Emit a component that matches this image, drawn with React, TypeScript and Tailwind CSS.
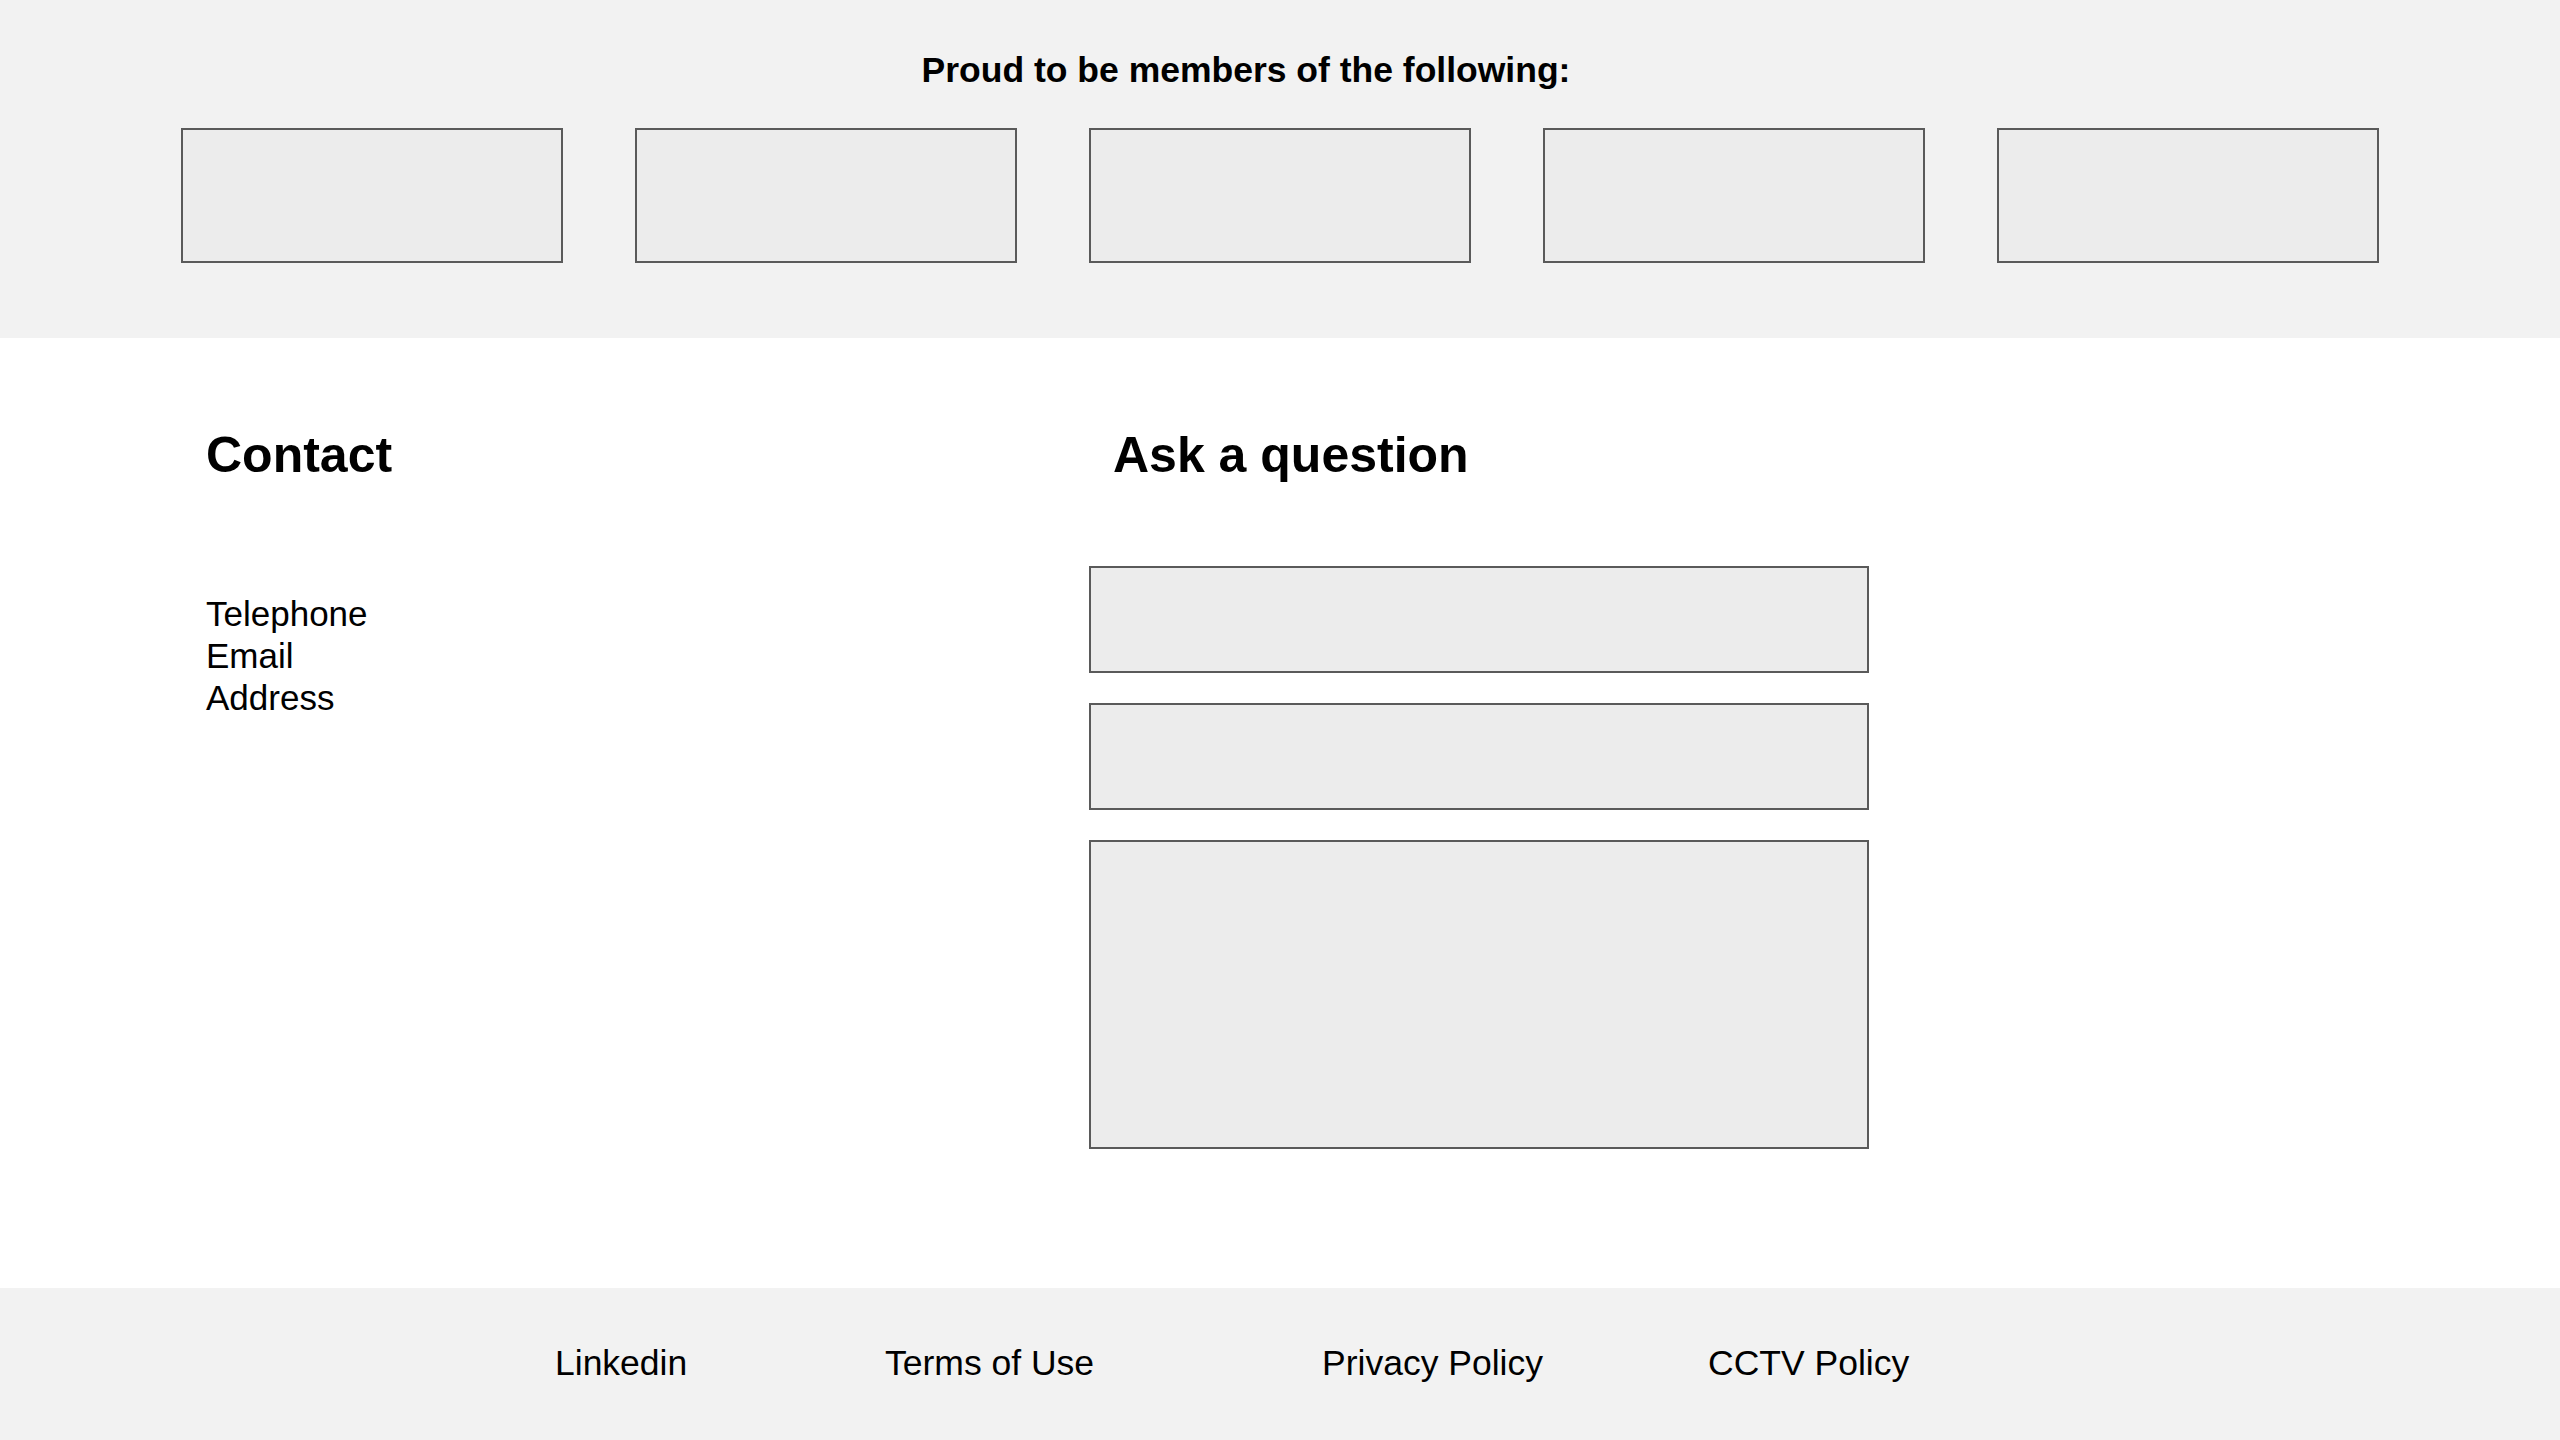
import React from "react";

const font = { fontFamily: '"Liberation Sans", Arial, sans-serif' };

function LogoBox() {
  return <div className="w-[382px] h-[135px] border-2 border-[#5a5a5a] bg-[#ececec] shrink-0" />;
}

export default function App() {
  return (
    <div className="w-[2560px] h-[1440px] bg-white text-black flex flex-col" style={font}>
      <section className="bg-[#f2f2f2] h-[338px] flex flex-col items-center">
        <div className="mt-[50px] h-[40px] leading-[40px] text-[35.5px] font-bold pr-[68px]">
          Proud to be members of the following:
        </div>
        <div className="mt-[38px] flex gap-[72px]">
          <LogoBox />
          <LogoBox />
          <LogoBox />
          <LogoBox />
          <LogoBox />
        </div>
      </section>

      <section className="h-[950px] flex pl-[206px] pt-[87px]">
        <div className="w-[883px] flex flex-col">
          <h2 className="text-[50px] font-bold leading-[60px] h-[60px]">Contact</h2>
          <div className="mt-[108px] text-[35px] leading-[42px]">
            <div>Telephone</div>
            <div>Email</div>
            <div>Address</div>
          </div>
        </div>
        <div className="w-[780px] flex flex-col">
          <h2 className="pl-[24px] text-[50px] font-bold leading-[60px] h-[60px]">Ask a question</h2>
          <div className="mt-[81px] flex flex-col gap-[30px]">
            <div className="h-[107px] border-2 border-[#5a5a5a] bg-[#ececec]" />
            <div className="h-[107px] border-2 border-[#5a5a5a] bg-[#ececec]" />
            <div className="h-[309px] border-2 border-[#5a5a5a] bg-[#ececec]" />
          </div>
        </div>
      </section>

      <footer className="bg-[#f2f2f2] h-[152px] flex items-center pl-[555px] text-[35.5px]">
        <div className="w-[330px]">Linkedin</div>
        <div className="w-[437px]">Terms of Use</div>
        <div className="w-[386px]">Privacy Policy</div>
        <div>CCTV Policy</div>
      </footer>
    </div>
  );
}
